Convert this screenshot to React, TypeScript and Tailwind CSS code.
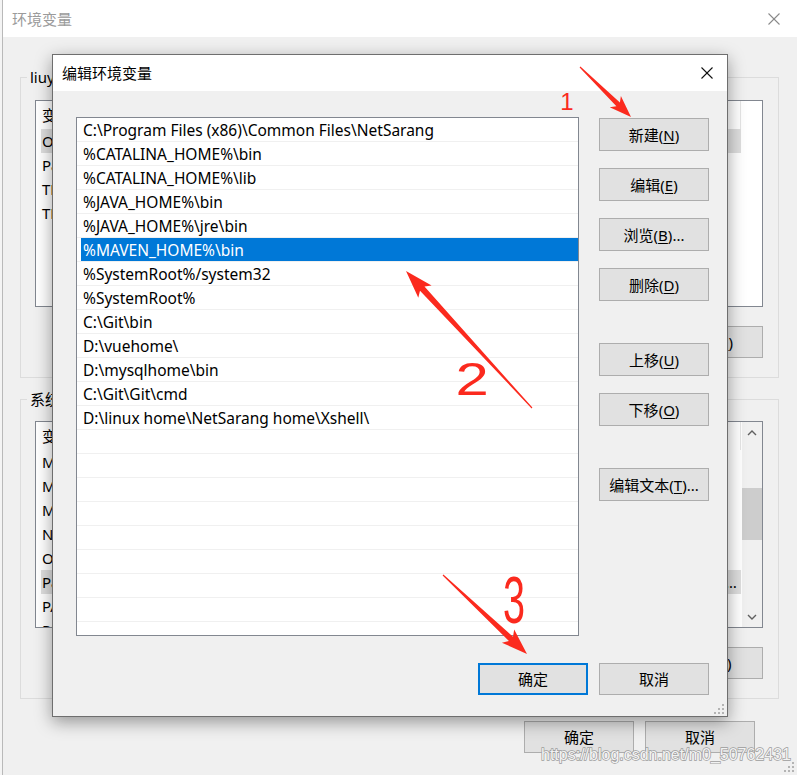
import React from "react";

type Pt = [number, number];

function arrowPoints(x0: number, y0: number, x1: number, y1: number, hl: number, hw: number, sw: number): string {
  const dx = x1 - x0;
  const dy = y1 - y0;
  const L = Math.hypot(dx, dy);
  const ux = dx / L;
  const uy = dy / L;
  const nx = -uy;
  const ny = ux;
  const bx = x1 - ux * hl;
  const by = y1 - uy * hl;
  const pts: Pt[] = [
    [x0 + nx * 0.6, y0 + ny * 0.6],
    [bx + nx * sw, by + ny * sw],
    [bx - ux * 4 + nx * hw, by - uy * 4 + ny * hw],
    [x1, y1],
    [bx - ux * 4 - nx * hw, by - uy * 4 - ny * hw],
    [bx - nx * sw, by - ny * sw],
    [x0 - nx * 0.6, y0 - ny * 0.6],
  ];
  return pts.map((p) => p.map((v) => v.toFixed(1)).join(",")).join(" ");
}

function Btn({
  label,
  m,
  suffix = "",
  primary = false,
}: {
  label: string;
  m?: string;
  suffix?: string;
  primary?: boolean;
}) {
  return (
    <div
      className={
        primary
          ? "w-[110px] h-[32px] shrink-0 bg-[#e1e1e1] border-2 border-[#0078d7] flex items-center justify-center text-[15px] leading-[20px] text-black"
          : "w-[110px] h-[32px] shrink-0 bg-[#e1e1e1] border border-[#adadad] flex items-center justify-center text-[15px] leading-[20px] text-black"
      }
    >
      <span className="whitespace-nowrap">
        {label}
        {m ? (
          <>
            (<span className="underline underline-offset-[2px] decoration-1">{m}</span>)
          </>
        ) : null}
        {suffix}
      </span>
    </div>
  );
}

function DlgBtn({ label, m, suffix = "" }: { label: string; m: string; suffix?: string }) {
  return (
    <div className="w-[110px] h-[33px] shrink-0 bg-[#e1e1e1] border border-[#adadad] flex items-center justify-center text-[15px] leading-[20px] text-black">
      <span className="whitespace-nowrap">
        {label}(<span className="underline underline-offset-[2px] decoration-1">{m}</span>){suffix}
      </span>
    </div>
  );
}

type BgRow = { name: string; value: string; hl?: boolean };

function Chevron({ up }: { up: boolean }) {
  return (
    <svg width="10" height="6" viewBox="0 0 10 6">
      {up ? (
        <polyline points="1,5 5,1 9,5" fill="none" stroke="#606060" strokeWidth="1.4" />
      ) : (
        <polyline points="1,1 5,5 9,1" fill="none" stroke="#606060" strokeWidth="1.4" />
      )}
    </svg>
  );
}

function BgList({ rows, scrollbar }: { rows: BgRow[]; scrollbar: boolean }) {
  return (
    <div className="w-full h-[207px] border border-[#828790] bg-white flex overflow-hidden">
      <div className="flex-1 min-w-0 flex flex-col pl-[5px]">
        <div className="h-[28px] shrink-0 flex text-[15px] leading-[20px]">
          <div className="w-[210px] shrink-0 pl-[1px] flex items-center">变量</div>
          <div className="flex-1 min-w-0 flex items-center border-r border-[#e5e5e5] pl-[6px]">值</div>
        </div>
        {rows.map((r, i) => (
          <div
            key={i}
            className={
              r.hl
                ? "h-[24px] shrink-0 flex items-center text-[15px] leading-[20px] bg-[#dedede]"
                : "h-[24px] shrink-0 flex items-center text-[15px] leading-[20px]"
            }
          >
            <div className="w-[210px] shrink-0 pl-[1px] whitespace-nowrap overflow-hidden">{r.name}</div>
            <div className="flex-1 min-w-0 pl-[6px] pr-[4px] whitespace-nowrap overflow-hidden text-ellipsis">{r.value}</div>
          </div>
        ))}
      </div>
      {scrollbar ? (
        <div className="w-[21px] shrink-0 border-l border-white flex flex-col bg-[#f0f0f0]">
          <div className="h-[21px] flex items-center justify-center">
            <Chevron up />
          </div>
          <div className="flex-1 pt-[45px]">
            <div className="h-[52px] bg-[#cdcdcd]" />
          </div>
          <div className="h-[21px] flex items-center justify-center">
            <Chevron up={false} />
          </div>
        </div>
      ) : (
        <div className="w-[21px] shrink-0" />
      )}
    </div>
  );
}

const userRows: BgRow[] = [
  { name: "OneDrive", value: "C:\\Users\\liuyu\\OneDrive", hl: true },
  {
    name: "Path",
    value:
      "C:\\Users\\liuyu\\AppData\\Local\\Microsoft\\WindowsApps;C:\\Program Files\\JetBrains\\IntelliJ IDEA 2020.1\\bin;C:\\Users\\liuyu\\AppData\\Roaming\\npm;C:\\Users\\liuyu\\AppData\\Local\\Programs",
  },
  { name: "TEMP", value: "%USERPROFILE%\\AppData\\Local\\Temp" },
  { name: "TMP", value: "%USERPROFILE%\\AppData\\Local\\Temp" },
];

const sysRows: BgRow[] = [
  { name: "MAVEN_HOME", value: "D:\\apache-maven-3.6.3" },
  { name: "MOZ_PLUGIN_PATH", value: "C:\\Program Files (x86)\\Foxit Software\\Foxit Reader\\plugins\\" },
  { name: "MYSQL_HOME", value: "D:\\mysqlhome" },
  { name: "NUMBER_OF_PROCESSORS", value: "8" },
  { name: "OS", value: "Windows_NT" },
  {
    name: "Path",
    value:
      "C:\\Program Files (x86)\\Common Files\\NetSarang;%CATALINA_HOME%\\bin;%CATALINA_HOME%\\lib;%JAVA_HOME%\\bin;%JAVA_HOME%\\jre\\bin;%MAVEN_HOME%\\bin",
    hl: true,
  },
  { name: "PATHEXT", value: ".COM;.EXE;.BAT;.CMD;.VBS;.VBE;.JS;.JSE;.WSF;.WSH;.MSC" },
  { name: "PROCESSOR_ARCHITECTURE", value: "AMD64" },
];

const pathRows = [
  "C:\\Program Files (x86)\\Common Files\\NetSarang",
  "%CATALINA_HOME%\\bin",
  "%CATALINA_HOME%\\lib",
  "%JAVA_HOME%\\bin",
  "%JAVA_HOME%\\jre\\bin",
  "%MAVEN_HOME%\\bin",
  "%SystemRoot%/system32",
  "%SystemRoot%",
  "C:\\Git\\bin",
  "D:\\vuehome\\",
  "D:\\mysqlhome\\bin",
  "C:\\Git\\Git\\cmd",
  "D:\\linux home\\NetSarang home\\Xshell\\",
];

function Grip() {
  const dots: Pt[] = [
    [9, 9],
    [5, 9],
    [1, 9],
    [9, 5],
    [5, 5],
    [9, 1],
  ];
  return (
    <svg width="12" height="12" viewBox="0 0 12 12">
      {dots.map((d, i) => (
        <rect key={i} x={d[0]} y={d[1]} width="2" height="2" fill="#b4b4b4" />
      ))}
    </svg>
  );
}

function CloseX({ color }: { color: string }) {
  return (
    <svg width="12" height="12" viewBox="0 0 12 12">
      <line x1="0.5" y1="0.5" x2="11.5" y2="11.5" stroke={color} strokeWidth="1.1" />
      <line x1="11.5" y1="0.5" x2="0.5" y2="11.5" stroke={color} strokeWidth="1.1" />
    </svg>
  );
}

export default function App() {
  const red = "#fb2a1e";
  const emptyRows = Array.from({ length: 8 });
  return (
    <div className="relative w-[797px] h-[775px] overflow-hidden bg-[#f0f0f0] text-black font-['Noto_Sans','Noto_Sans_CJK_SC',sans-serif]">
      {/* background window */}
      <div className="flex h-full">
        <div className="w-[2px] shrink-0 bg-[#f4f4f4]" />
        <div className="w-[1px] shrink-0 bg-[#b9b9b9]" />
        <div className="flex-1 min-w-0 flex flex-col">
          <div className="h-[37px] shrink-0 bg-white flex items-center justify-between pl-[9px] pr-[17px]">
            <span className="text-[15px] leading-[20px] text-[#9b9b9b]">环境变量</span>
            <CloseX color="#8a8a8a" />
          </div>
          <div className="flex-1 min-w-0 flex flex-col pt-[30px] pl-[17px] pr-[18px]">
            <fieldset className="min-w-0 border border-[#dcdcdc] pl-[14px] pr-[15px] pb-[19px]">
              <legend className="-ml-[8px] px-[3px] text-[15px] leading-[20px]">liuyu 的用户变量(U)</legend>
              <div className="mt-[13px]">
                <BgList rows={userRows} scrollbar={false} />
              </div>
              <div className="mt-[19px] flex justify-end gap-[11px]">
                <Btn label="新建" m="N" suffix="..." />
                <Btn label="编辑" m="E" suffix="..." />
                <Btn label="删除" m="D" />
              </div>
            </fieldset>
            <fieldset className="min-w-0 mt-[11px] border border-[#dcdcdc] pl-[14px] pr-[15px] pb-[19px]">
              <legend className="-ml-[8px] px-[3px] text-[15px] leading-[20px]">系统变量(S)</legend>
              <div className="mt-[12px]">
                <BgList rows={sysRows} scrollbar />
              </div>
              <div className="mt-[19px] flex justify-end gap-[11px]">
                <Btn label="新建" m="W" suffix="..." />
                <Btn label="编辑" m="I" suffix="..." />
                <Btn label="删除" m="L" />
              </div>
            </fieldset>
            <div className="mt-[22px] mr-[24px] flex justify-end gap-[11px]">
              <Btn label="确定" />
              <Btn label="取消" />
            </div>
          </div>
        </div>
      </div>

      {/* bg window resize grip */}
      <div className="absolute right-[2px] bottom-[2px]">
        <Grip />
      </div>

      {/* edit dialog */}
      <div className="absolute left-[52px] top-[54px] w-[676px] h-[663px] border border-[#6e6e6e] bg-[#f0f0f0] shadow-[0_5px_16px_rgba(0,0,0,0.38)] flex flex-col">
        <div className="h-[36px] shrink-0 bg-white flex items-center justify-between pl-[9px] pr-[14px]">
          <span className="text-[15px] leading-[20px] text-black">编辑环境变量</span>
          <CloseX color="#111111" />
        </div>
        <div className="flex-1 flex flex-col pl-[23px] pt-[26px] pr-[18px]">
          <div className="flex">
            <div className="w-[503px] h-[519px] shrink-0 border border-[#828790] bg-white overflow-hidden flex flex-col">
              {pathRows.map((p, i) =>
                i === 5 ? (
                  <div key={i} className="h-[24px] shrink-0 border-b border-[#f0f0f0] pl-[4px]">
                    <div className="h-full bg-[#0078d7] flex items-center pl-[2px] text-[15.5px] leading-[20px] text-white whitespace-nowrap">
                      {p}
                    </div>
                  </div>
                ) : (
                  <div
                    key={i}
                    className="h-[24px] shrink-0 border-b border-[#f0f0f0] flex items-center pl-[6px] text-[15.5px] leading-[20px] text-black whitespace-nowrap"
                  >
                    {p}
                  </div>
                )
              )}
              {emptyRows.map((_, i) => (
                <div key={"e" + i} className="h-[24px] shrink-0 border-b border-[#f0f0f0]" />
              ))}
            </div>
            <div className="ml-[20px] w-[110px] flex flex-col pt-[1px]">
              <DlgBtn label="新建" m="N" />
              <div className="mt-[17px]">
                <DlgBtn label="编辑" m="E" />
              </div>
              <div className="mt-[17px]">
                <DlgBtn label="浏览" m="B" suffix="..." />
              </div>
              <div className="mt-[17px]">
                <DlgBtn label="删除" m="D" />
              </div>
              <div className="mt-[42px]">
                <DlgBtn label="上移" m="U" />
              </div>
              <div className="mt-[17px]">
                <DlgBtn label="下移" m="O" />
              </div>
              <div className="mt-[42px]">
                <DlgBtn label="编辑文本" m="T" suffix="..." />
              </div>
            </div>
          </div>
          <div className="mt-[27px] flex justify-end gap-[11px]">
            <Btn label="确定" primary />
            <Btn label="取消" />
          </div>
        </div>
        <div className="absolute right-[2px] bottom-[1px]">
          <Grip />
        </div>
      </div>

      {/* annotations + watermark */}
      <svg className="absolute left-0 top-0 pointer-events-none" width="797" height="775" viewBox="0 0 797 775">
        <polygon points={arrowPoints(580, 67, 631, 117, 18, 8, 2.5)} fill={red} />
        <polygon points={arrowPoints(532, 408, 406, 271, 24, 9, 3)} fill={red} />
        <polygon points={arrowPoints(443, 575, 527, 654, 22, 9, 3)} fill={red} />
        <text x="567" y="110" fontSize="24" textAnchor="middle" fill={red} fontFamily="'Liberation Sans', sans-serif">
          1
        </text>
        <text
          transform="translate(472,395) scale(1.3,1)"
          x="0"
          y="0"
          fontSize="46"
          textAnchor="middle"
          fill={red}
          fontFamily="'Liberation Sans', sans-serif"
        >
          2
        </text>
        <text
          transform="translate(514,623) scale(0.6,1)"
          x="0"
          y="0"
          fontSize="66"
          textAnchor="middle"
          fill={red}
          fontFamily="'Liberation Sans', sans-serif"
        >
          3
        </text>
        <text
          x="541"
          y="760"
          fontSize="16"
          fill="#ffffff"
          fillOpacity="0.9"
          stroke="#9c9c9c"
          strokeWidth="1.4"
          style={{ paintOrder: "stroke" }}
          fontFamily="'Liberation Sans', sans-serif"
        >
          https://blog.csdn.net/m0_50762431
        </text>
      </svg>
    </div>
  );
}
